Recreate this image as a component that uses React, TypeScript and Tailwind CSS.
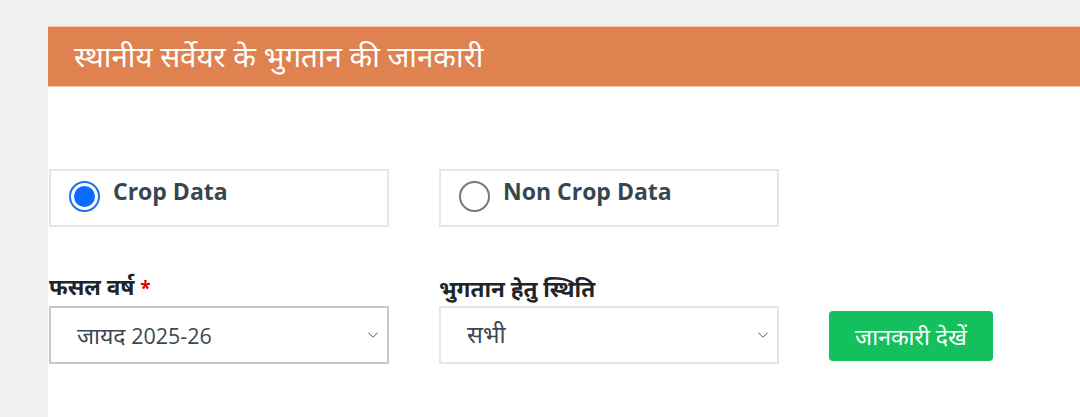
import { ChevronDown } from "lucide-react";

const font = { fontFamily: '"Open Sans", "Noto Sans", sans-serif' };

function RadioBox({ label, checked }: { label: string; checked?: boolean }) {
  return (
    <label className="flex h-[58px] w-[340px] items-start border-2 border-[#e6e6e6] pl-[18px] pt-[8px]">
      <span
        className={
          checked
            ? "mt-[2px] flex h-[31px] w-[31px] items-center justify-center rounded-full border-2 border-[#1a73e8]"
            : "mt-[2px] flex h-[31px] w-[31px] items-center justify-center rounded-full border-2 border-[#777]"
        }
      >
        {checked && <span className="h-[21px] w-[21px] rounded-full bg-[#0a6cff]" />}
      </span>
      <span className="ml-[13px] -mt-[3px] text-[23px] font-bold leading-[31px] text-[#37474f]">{label}</span>
    </label>
  );
}

function SelectBox({ children, dark }: { children: React.ReactNode; dark?: boolean }) {
  return (
    <div
      className={
        dark
          ? "flex h-[58px] w-[340px] items-center justify-between border-2 border-[#c9c9c9] pl-[26px] pr-[5px]"
          : "flex h-[58px] w-[340px] items-center justify-between border-2 border-[#e6e6e6] pl-[26px] pr-[5px]"
      }
    >
      <span className="text-[21.5px] text-[#3b4852]">{children}</span>
      <ChevronDown size={18} strokeWidth={1.3} className="text-[#555]" />
    </div>
  );
}

export default function App() {
  return (
    <div className="h-[417px] w-[1080px] overflow-hidden bg-[#f0f0f0] pl-[48px] pt-[26px]" style={font}>
      <div className="h-[400px] bg-white">
        <div className="flex h-[61px] items-center border-y border-[#f3c9a6] bg-[#df824f] pl-[26px] pb-[2px]">
          <h1 className="text-[29.5px] font-normal leading-none text-white">स्थानीय सर्वेयर के भुगतान की जानकारी</h1>
        </div>
        <div className="flex gap-[50px] pl-[1px] pt-[82px]">
          <RadioBox label="Crop Data" checked />
          <RadioBox label="Non Crop Data" />
        </div>
        <div className="flex items-end gap-[50px] pl-[1px] pt-[45px]">
          <div>
            <p className="mb-[3px] text-[22.5px] font-bold leading-[29px] text-[#212529]">
              फसल वर्ष <span className="text-[19px] text-[#e00000]">*</span>
            </p>
            <SelectBox dark>
              <span className="text-[23px]">जायद</span> 2025-26
            </SelectBox>
          </div>
          <div>
            <p className="mb-[3px] text-[22.5px] font-bold leading-[29px] text-[#212529]">भुगतान हेतु स्थिति</p>
            <SelectBox>
              <span className="text-[23.5px]">सभी</span>
            </SelectBox>
          </div>
          <div className="pb-[3px]">
            <button className="h-[50px] w-[164px] rounded-[4px] bg-[#14bf5e] text-[23px] text-white">जानकारी देखें</button>
          </div>
        </div>
      </div>
    </div>
  );
}
